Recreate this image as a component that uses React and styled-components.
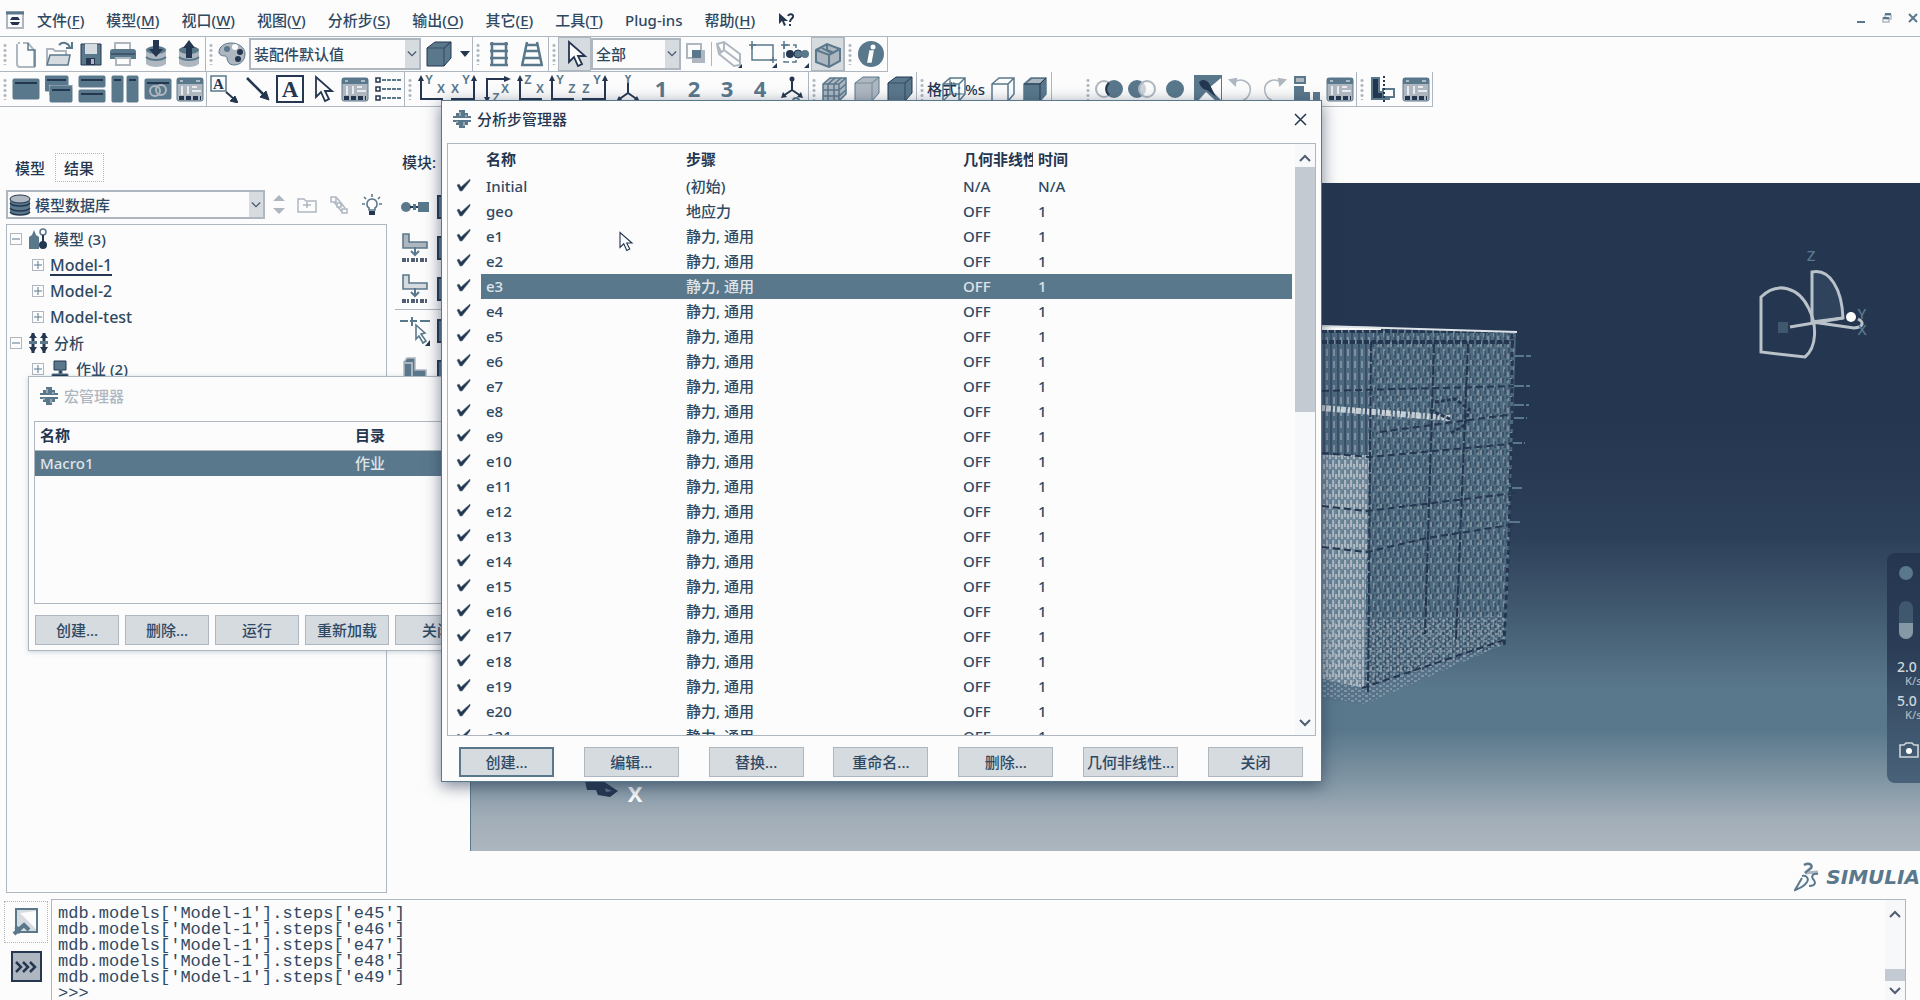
import React from "react";
import styled, { createGlobalStyle, css } from "styled-components";

const D = "#253650";
const M = "#5a788c";
const L = "#aeb7c0";
const W = "#fcfcfc";
const FACE = "#d6dbe0";
const TEXT = "#2f4963";

const Global = createGlobalStyle`
  * { box-sizing: border-box; }
  html, body { margin: 0; background: ${W}; }
  body {
    font-family: "Noto Sans", "Noto Sans CJK SC", sans-serif;
    font-size: 15px;
    font-weight: 500;
    line-height: 20px;
    color: ${TEXT};
    overflow: hidden;
  }
  button, select, input {
    font: inherit;
    color: inherit;
    margin: 0;
    padding: 0;
    border: 0;
    border-radius: 0;
    background: none;
  }
  svg { display: block; flex: none; }
`;

/* ---------- application frame ---------- */

const Desktop = styled.div`
  position: relative;
  display: flex;
  flex-direction: column;
  height: 100vh;
  overflow: hidden;
`;

const MenuBar = styled.header`
  display: flex;
  align-items: center;
  justify-content: space-between;
  height: 37px;
  padding: 4px 2px 0 6px;
  border-bottom: 1px solid ${L};
`;

const MenuItems = styled.nav`
  display: flex;
  align-items: center;
  gap: 22px;
`;

const MenuLogo = styled.span`
  margin-right: -9px;
`;

const MenuItem = styled.button`
  white-space: nowrap;
  u { text-underline-offset: 2px; }
`;

const WindowButtons = styled.div`
  display: flex;
  align-items: center;
  gap: 16px;
  padding-bottom: 4px;
`;

const ToolBar = styled.div`
  display: flex;
`;

const ToolGroup = styled.div`
  display: flex;
  align-items: center;
  height: 35px;
  border-right: 1px solid ${L};
  border-bottom: 1px solid ${L};
`;

const Gap = styled.div`
  width: 31px;
`;

const GripBox = styled.span`
  width: 9px;
  height: 22px;
  background: radial-gradient(circle, ${L} 0 1px, transparent 2px) 0 0 / 10px 5px;
`;

const ToolButton = styled.button`
  display: flex;
  align-items: center;
  justify-content: center;
  width: ${(p) => p.$w || 33}px;
  height: 34px;
  ${(p) => p.$down && css`background: ${FACE}; border: 1px solid ${L};`}
`;

const Divider = styled.span`
  width: 1px;
  height: 24px;
  background: ${L};
`;

const FormatLabel = styled.span`
  position: relative;
  width: 60px;
  padding-left: 1px;
  white-space: nowrap;
  color: ${D};
  svg { position: absolute; left: 14px; top: -4px; }
`;

const SelectBox = styled.span`
  position: relative;
  display: flex;
  width: ${(p) => p.$w}px;
  height: ${(p) => p.$h || 32}px;
  border: 2px solid ${L};
  select {
    appearance: none;
    flex: 1;
    width: 100%;
    padding-left: ${(p) => p.$pad || 3}px;
    color: ${TEXT};
  }
`;

const SelectArrow = styled.span`
  position: absolute;
  right: 0;
  top: 0;
  bottom: 0;
  width: 14px;
  display: flex;
  align-items: center;
  justify-content: center;
  background: ${FACE};
  pointer-events: none;
`;

const SelectIcon = styled.span`
  position: absolute;
  left: 1px;
  top: 2px;
  pointer-events: none;
`;

/* ---------- work area ---------- */

const Work = styled.main`
  flex: 1;
  min-height: 0;
  display: grid;
  grid-template-columns: 387px 83px minmax(0, 1fr);
`;

const SidePanel = styled.section`
  display: flex;
  flex-direction: column;
  min-height: 0;
  padding: 46px 0 6px 6px;
`;

const Tabs = styled.div`
  display: flex;
`;

const Tab = styled.button`
  width: 49px;
  height: 29px;
  padding-right: 1px;
  color: ${D};
  border: 1px ${(p) => (p.$active ? "solid transparent" : `dotted ${L}`)};
`;

const SideTools = styled.div`
  display: flex;
  align-items: center;
  justify-content: space-between;
  padding: 8px 4px 5px 0;
`;

const SideButtons = styled.div`
  display: flex;
  gap: 12px;
`;

const Tree = styled.div`
  flex: 1;
  border: 1px solid ${L};
  padding: 1px 0 0 2px;
`;

const TreeRow = styled.div`
  display: flex;
  align-items: center;
  gap: 6px;
  height: 26px;
  padding-left: ${(p) => (p.$deep ? 23 : 1)}px;
  font-size: ${(p) => (p.$leaf ? 16 : 15)}px;
`;

const TreeName = styled.span`
  line-height: 18px;
  ${(p) => p.$current && css`box-shadow: 0 2px ${D};`}
`;

const Expander = styled.button`
  width: 12px;
  height: 12px;
  border: 1px solid ${L};
  display: flex;
  align-items: center;
  justify-content: center;
`;

const ToolBox = styled.aside`
  padding: 45px 0 0 8px;
`;

const ModuleLabel = styled.div`
  padding: 0 0 14px 7px;
  color: ${D};
`;

const ToolBoxGrid = styled.div`
  display: grid;
  grid-template-columns: 40px 32px;
  grid-auto-rows: 41px;
  align-items: center;
  justify-items: center;
  ${(p) => p.$line && css`border-top: 1px solid ${L};`}
`;

const CanvasColumn = styled.section`
  display: flex;
  flex-direction: column;
  min-height: 0;
  padding-top: 76px;
`;

const Viewport = styled.div`
  position: relative;
  flex: 1;
  overflow: hidden;
  border-left: 1px solid ${M};
  background: linear-gradient(
    ${D} 0%, ${D} 36%, #2d4059 53%, #3d546b 62%, #496479 68%, ${M} 76%,
    ${M} 82%, #8498a6 90%, #a1adb7 95%, #acb6bf 100%
  );
`;

const Placed = styled.div`
  position: absolute;
  left: ${(p) => p.$x}px;
  top: ${(p) => p.$y}px;
`;

const Compass = styled.div`
  position: absolute;
  right: 45px;
  top: 57px;
`;

const Brand = styled.div`
  display: flex;
  align-items: center;
  justify-content: flex-end;
  gap: 5px;
  height: 48px;
  padding-top: 4px;
  font: italic bold 20px "DejaVu Sans", sans-serif;
  color: ${M};
`;

/* ---------- console ---------- */

const Console = styled.footer`
  display: flex;
  height: 101px;
  padding-right: 14px;
`;

const ConsoleTabs = styled.div`
  display: flex;
  flex-direction: column;
  align-items: center;
  gap: 8px;
  width: 51px;
  padding: 2px 0 0 1px;
`;

const ConsoleTab = styled.button`
  display: flex;
  align-items: center;
  justify-content: center;
  width: 44px;
  height: 42px;
  border: 1px dotted ${L};
`;

const PromptTab = styled.button`
  display: flex;
  align-items: center;
  justify-content: center;
  width: 31px;
  height: 31px;
  border: 2px solid ${D};
  background: ${L};
`;

const ConsolePane = styled.div`
  flex: 1;
  display: flex;
  border: 1px solid ${L};
  border-bottom: 0;
`;

const ConsoleText = styled.div`
  flex: 1;
  padding: 6px 0 0 6px;
  font: 17px/16px "Liberation Mono", monospace;
  color: ${TEXT};
  overflow: hidden;
`;

const PromptLine = styled.label`
  display: flex;
  input { flex: 1; height: 16px; outline: 0; }
`;

const ScrollTrack = styled.div`
  display: flex;
  flex-direction: column;
  align-items: center;
  justify-content: space-between;
  width: 20px;
  padding: 10px 0 ${(p) => p.$end || 8}px;
  background: #f7f8f9;
`;

const ScrollThumb = styled.span`
  width: 20px;
  height: ${(p) => p.$h}px;
  margin: ${(p) => p.$m};
  background: #c3cad1;
`;

/* ---------- floating windows ---------- */

const Window = styled.section`
  position: absolute;
  left: ${(p) => p.$x}px;
  top: ${(p) => p.$y}px;
  width: ${(p) => p.$w}px;
  height: ${(p) => p.$h}px;
  display: flex;
  flex-direction: column;
  padding: 0 5px ${(p) => (p.$active ? 4 : 5)}px;
  background: ${W};
  border: 1px solid ${(p) => (p.$active ? M : L)};
  box-shadow: ${(p) => (p.$active ? "0 4px 15px rgba(37, 54, 80, 0.6)" : "0 1px 5px rgba(90, 120, 140, 0.3)")};
`;

const TitleBar = styled.div`
  display: flex;
  align-items: center;
  gap: 6px;
  height: ${(p) => p.$h}px;
  padding: 0 9px 6px 6px;
  color: ${(p) => (p.$active ? D : L)};
  button { margin-left: auto; }
`;

const ListFrame = styled.div`
  flex: 1;
  min-height: 0;
  display: flex;
  overflow: hidden;
  border: 1px solid ${L};
`;

const ListBody = styled.div`
  flex: 1;
  overflow: hidden;
  padding-right: ${(p) => p.$end || 0}px;
`;

const DataTable = styled.table`
  width: 100%;
  table-layout: fixed;
  border-collapse: collapse;
  th, td {
    height: 25px;
    padding: 0 0 0 5px;
    line-height: 25px;
    text-align: left;
    white-space: nowrap;
    overflow: hidden;
  }
  th {
    height: ${(p) => p.$head}px;
    font-weight: 600;
    color: ${D};
    ${(p) => p.$rule && css`border-bottom: 1px solid ${L};`}
  }
`;

const Cell = styled.td`
  ${(p) => p.$on && css`background: ${M}; color: #dfe4e8;`}
`;

const Column = styled.col`
  width: ${(p) => p.$w}px;
`;

const CheckPad = styled.span`
  display: block;
  padding-left: 3px;
`;

const ButtonRow = styled.div`
  display: flex;
  justify-content: ${(p) => (p.$spread ? "space-between" : "flex-start")};
  gap: 6px;
  padding: ${(p) => (p.$spread ? "11px 13px 0 12px" : "11px 1px 0")};
`;

const PushButton = styled.button`
  flex: none;
  width: ${(p) => p.$w}px;
  height: 30px;
  white-space: nowrap;
  color: ${TEXT};
  background: ${FACE};
  border: ${(p) => (p.$main ? `2px solid ${M}` : `1px solid ${L}`)};
`;

/* ---------- screen recorder ---------- */

const Recorder = styled.aside`
  position: absolute;
  right: 0;
  top: 553px;
  width: 33px;
  height: 230px;
  padding: 13px 0 0 12px;
  border-radius: 8px 0 0 8px;
  background: linear-gradient(${D} 0%, #2a3c56 40%, #3b526a 70%, #48627a 100%);
  color: #cfd5da;
  overflow: hidden;
`;

const Rate = styled.div`
  height: 34px;
  margin-left: -2px;
  font-size: 14px;
  line-height: 16px;
  white-space: nowrap;
  small { display: block; padding-left: 8px; font-size: 11px; line-height: 12px; color: ${L}; }
`;

const RecorderGap = styled.div`
  height: ${(p) => p.$h}px;
`;

/* ---------- drawings ---------- */

const Ic = ({ w = 28, h = 28, vw, vh, children }) => (
  <svg width={w} height={h} viewBox={`0 0 ${vw || w} ${vh || h}`} fill="none" stroke={M} strokeWidth="2" aria-hidden="true">
    {children}
  </svg>
);

const Chevron = ({ up, size = 12, width = 2 }) => (
  <Ic w={size} h={8} vw={12} vh={8}>
    <path d={up ? "M1 7 6 2l5 5" : "M1 1l5 5 5-5"} strokeWidth={width} stroke={D} strokeOpacity=".8" />
  </Ic>
);

const Mark = () => (
  <Ic w={18} h={18}>
    <path d="M6 0h6v3h3v3h3v2H0V6h3V3h3zM0 10h18v2h-3v3h-3v3H6v-3H3v-3H0z" fill={M} stroke="none" />
    <path d="M7 2v4M11 12v4M13 5v2M4 11v2" stroke={L} strokeWidth="1.5" />
  </Ic>
);

const PageIcon = () => (
  <Ic><path d="M6 3h2M5 4v20c0 2 1 3 3 3h14V10l-6-7h-5" stroke={L} /><path d="M16 3v7h7v17" stroke={M} strokeWidth="1.5" /></Ic>
);
const OpenIcon = () => (
  <Ic><path d="M2 24V9h6l2 2h11v4" stroke={L} /><path d="M2 25l3-10h20l-2 10z" fill={FACE} stroke={M} strokeWidth="1.5" /><path d="M14 5c4-4 9-2 11 2m2-5v6h-6" strokeWidth="2" /></Ic>
);
const SaveIcon = () => (
  <Ic><path d="M4 4h20v21H4z" fill={M} stroke={D} strokeWidth="1" /><path d="M8 4h12v10H8z" fill={FACE} stroke="none" /><path d="M9 18h9v7H9z" fill={D} stroke="none" /><path d="M14 19h3v5h-3z" fill={L} stroke="none" /></Ic>
);
const PrintIcon = () => (
  <Ic><path d="M6 10V3h15v7" fill={W} stroke={L} /><path d="M1 12c0-2 1-3 3-3h20c2 0 3 1 3 3v7H1z" fill={M} stroke="none" /><path d="M2 14h24" stroke={D} strokeWidth="1" /><path d="M7 18h14v7H7z" fill={W} stroke={L} /></Ic>
);
const DbIcon = ({ up }) => (
  <Ic>
    <path d="M4 9v15c5 4 15 4 20 0V9z" fill={L} stroke="none" />
    <ellipse cx="14" cy="10" rx="10" ry="4" fill={M} stroke="none" />
    <path d="M4 17c5 4 15 4 20 0" stroke={M} />
    <path d={up ? "M14 0l6 8h-3v10h-6V8H8z" : "M11 0h6v9h4l-7 8-7-8h4z"} fill={D} stroke="none" />
  </Ic>
);
const PaletteIcon = () => (
  <Ic>
    <path d="M13 3C6 3 1 7 1 12c0 3 3 4 6 4 3 0 1 5 5 8 6 3 15-1 15-10C27 7 20 3 13 3z" fill={L} stroke={M} strokeWidth="1" />
    <circle cx="9" cy="9" r="3" fill={M} stroke="none" /><circle cx="17" cy="7" r="3" fill={W} stroke="none" /><circle cx="22" cy="12" r="3" fill={D} stroke="none" /><circle cx="20" cy="19" r="3" fill={D} stroke="none" />
  </Ic>
);
const CubeSolid = ({ fill = M, line = D }) => (
  <Ic><path d="M2 8l8-6h16v16l-7 8H2z" fill={fill} stroke={line} strokeWidth="1" /><path d="M2 8h17v18M19 8l7-6" stroke={line} strokeWidth="1.2" strokeOpacity=".6" /></Ic>
);
const CubeGrid = () => (
  <Ic><path d="M3 9l7-6h16v16l-7 7H3z" fill={L} strokeWidth="1.5" /><path d="M3 9h16v17M19 9l7-6M8 9v17M14 9v17M3 15h16l7-6M3 21h16l7-6M8 9l7-6M14 9l7-6" strokeWidth="1.5" /></Ic>
);
const CubeLine = ({ all }) => (
  <Ic><path d="M3 9l7-6h15v16l-6 7H3zM3 9h16v17M19 9l6-6" strokeWidth="1.5" />{all && <path d="M10 3v16h15M10 19l-7 7" strokeWidth="1.2" />}</Ic>
);
const CubeShade = () => (
  <Ic><path d="M3 9l7-6h15v16l-6 7H3z" fill={M} strokeWidth="1.5" /><path d="M6 8l5-4h12l-4 4z" fill={L} stroke="none" /><path d="M3 9h16v17M19 9l6-6" stroke={D} strokeWidth="1" /></Ic>
);
const Ladder = ({ tilt }) => (
  <Ic>
    {tilt ? (
      <path d="M9 2 4 26M19 2l5 24M8 5h12M7 11h14M6 18h16M3 25h22" strokeWidth="2.5" />
    ) : (
      <path d="M7 2v24M21 2v24M5 4h18M5 11h18M5 18h18M5 25h18" strokeWidth="2.5" />
    )}
  </Ic>
);
const CursorIcon = ({ w = 28, h = 28, line = 1.8 }) => (
  <Ic w={w} h={h} vw={28} vh={28}><path d="M8 2v20l5-5 4 9 4-2-4-8h7z" fill={W} stroke={D} strokeWidth={line} /></Ic>
);
const Overlap = () => (
  <Ic w={24} h={26}><path d="M3 3h14v14H3z" fill={W} stroke={L} /><path d="M8 9h13v13H8z" fill={L} stroke="none" /><path d="M8 17V9h9v8z" fill={M} stroke="none" /></Ic>
);
const HexBox = () => (
  <Ic><path d="M2 4l7-2 16 12v11l-6 1L4 14zM2 4l4 8M9 2v8l16 12M4 14l5-4" stroke={L} /><path d="M27 28v-4l-4 4z" fill={D} stroke="none" /></Ic>
);
const RectIcon = () => (
  <Ic><path d="M3 5h21v15H3z" strokeWidth="1.5" /><path d="M3 1v8M0 5h7M24 17v6M21 20h7" strokeWidth="1.5" /><path d="M28 28v-5l-5 5z" fill={D} stroke="none" /></Ic>
);
const GroupIcon = () => (
  <Ic><path d="M3 5h12v17H3z" strokeWidth="1.5" strokeDasharray="6 3" /><path d="M3 1v8M0 5h7" strokeWidth="1.5" /><circle cx="9" cy="14" r="4" fill={D} stroke="none" /><circle cx="17" cy="14" r="4" fill={M} stroke={D} strokeWidth="1" /><circle cx="24" cy="14" r="4" fill={M} stroke="none" /><path d="M28 28v-5l-5 5z" fill={D} stroke="none" /></Ic>
);
const DrumIcon = () => (
  <Ic><path d="M2 10l11-6 13 5v12l-11 6-13-5z" fill={L} strokeWidth="2" /><path d="M2 10l13 5 11-6M15 15v12M8 8l9 5M13 4v6l7 3" strokeWidth="2" /></Ic>
);
const InfoIcon = () => (
  <Ic><circle cx="14" cy="14" r="13" fill={M} stroke="none" /><circle cx="16" cy="7" r="2.5" fill={W} stroke="none" /><path d="M16 11h-3l-2 11h3z" fill={W} stroke={W} strokeWidth="1.5" /></Ic>
);

const Pane = ({ x, y, w, h }) => (
  <g><rect x={x} y={y} width={w} height={h} fill={M} stroke={M} strokeWidth="1" rx="1" /><path d={`M${x + 2} ${y + 4}h${w - 4}`} stroke={D} strokeWidth="2" /></g>
);
const PanesIcon = ({ kind }) => (
  <Ic>
    {kind === 1 && <Pane x={1} y={4} w={26} h={20} />}
    {kind === 2 && <g><Pane x={0} y={1} w={23} h={15} /><path d="M4 10h24v1H5v9H4z" fill={L} stroke="none" /><Pane x={5} y={11} w={22} h={16} /></g>}
    {kind === 3 && <g><Pane x={1} y={1} w={26} h={11} /><Pane x={1} y={15} w={26} h={12} /></g>}
    {kind === 4 && <g><Pane x={1} y={1} w={11} h={26} /><Pane x={16} y={1} w={11} h={26} /></g>}
    {kind === 5 && <g><Pane x={1} y={4} w={26} h={20} /><circle cx="11" cy="16" r="5" stroke={L} /><circle cx="17" cy="15" r="5" stroke={L} /></g>}
  </Ic>
);
const FormIcon = () => (
  <Ic>
    <rect x="1" y="3" width="26" height="23" rx="2" fill={L} stroke={M} strokeWidth="1" />
    <path d="M1 3h26v6H1z" fill={M} stroke="none" />
    <path d="M4 6h3M20 6h4" stroke={W} strokeWidth="1" />
    <path d="M6 11v9M12 11v8M16 16h9M16 12h5" stroke={W} strokeWidth="1.5" />
    <path d="M3 23h22" stroke={D} strokeWidth="4" strokeDasharray="5 2" />
  </Ic>
);
const Letter = ({ x, y, size, children }) => (
  <text x={x} y={y} fontSize={size} fontWeight="700" fontFamily="Liberation Serif, serif" fill={D} stroke="none" textAnchor="middle">{children}</text>
);
const NoteArrow = () => (
  <Ic><path d="M1 1h15v15H1z" strokeWidth="1.5" /><Letter x={8.5} y={14} size={15}>A</Letter><path d="M16 17l8 7" stroke={D} /><path d="M28 28l-8-2 5-5z" fill={D} stroke={D} strokeWidth="1" /></Ic>
);
const ArrowIcon = () => (
  <Ic><path d="M4 3l17 17" stroke={D} strokeWidth="2.5" /><path d="M26 25l-9-3 6-6z" fill={D} stroke={D} strokeWidth="1" /></Ic>
);
const TextBoxIcon = () => (
  <Ic><path d="M1 1h26v26H1z" stroke={D} /><Letter x={14} y={22} size={23}>A</Letter></Ic>
);
const ListIcon = () => (
  <Ic><path d="M8 5h19M8 14h19M8 23h19" strokeWidth="2" strokeDasharray="4 1" /><path d="M2 3h4v4H2zM2 12h4v4H2zM2 21h4v4H2z" stroke={D} strokeWidth="1.5" /></Ic>
);

const AxisText = ({ x, y, children }) => (
  <text x={x} y={y} fontSize="12" fontWeight="700" fontFamily="Liberation Sans, sans-serif" fill={M} stroke="none" textAnchor="middle">{children}</text>
);
const Axes = ({ v, h, flip }) => (
  <Ic>
    <path d={flip ? "M24 3v21H1" : "M4 3v21h22"} stroke={D} />
    <path d={flip ? "M24 0l3 6h-6z" : "M4 0l3 6H1z"} fill={D} stroke="none" />
    <AxisText x={flip ? 16 : 12} y={9}>{v}</AxisText>
    <AxisText x={flip ? 5 : 24} y={18}>{h}</AxisText>
  </Ic>
);
const AxesTop = () => (
  <Ic><path d="M4 24V4h19" stroke={D} /><path d="M28 4l-7-3v6zM4 28l-3-6h6z" fill={D} stroke="none" /><AxisText x={22} y={18}>X</AxisText><AxisText x={13} y={27}>Z</AxisText></Ic>
);
const AxesIso = () => (
  <Ic><path d="M14 8v10L4 25M14 18l10 7" stroke={D} /><path d="M2 27l3-6 3 4zM26 27l-3-6-3 4z" fill={D} stroke="none" /><AxisText x={14} y={8}>Y</AxisText></Ic>
);
const Tripod = () => (
  <Ic><path d="M14 3v12l-9 6M14 15l9 6" stroke={D} /><circle cx="14" cy="4" r="2.5" fill={D} stroke="none" /><path d="M3 23l2-6 4 5zM25 23l-2-6-4 5z" fill={D} stroke="none" /><circle cx="18" cy="26" r="3" /></Ic>
);
const Digit = ({ n }) => (
  <Ic><text x="14" y="22" fontSize="22" fontWeight="700" fontFamily="Noto Sans, sans-serif" fill={M} stroke="none" textAnchor="middle">{n}</text></Ic>
);
const Discs = ({ kind }) => (
  <Ic>
    {kind === 1 && <g><circle cx="9" cy="14" r="8" stroke={L} /><circle cx="19" cy="14" r="8" fill={M} /><path d="M14 8a8 8 0 0 0 0 12" stroke={D} /></g>}
    {kind === 2 && <g><circle cx="9" cy="14" r="8" fill={M} /><circle cx="19" cy="14" r="8" fill={W} fillOpacity=".7" stroke={L} /></g>}
    {kind === 3 && <circle cx="14" cy="14" r="8" fill={M} />}
  </Ic>
);
const PaintIcon = () => (
  <Ic><path d="M0 0h28v28H0z" fill={M} stroke="none" /><path d="M27 3v22L15 13zM3 27h20L12 17z" fill={W} stroke="none" /><path d="M5 7c5-4 9-1 11 3l6 12-9-7c-4 0-7-4-8-8z" fill={D} stroke="none" /></Ic>
);
const TurnIcon = ({ flip }) => (
  <Ic><g transform={flip ? "translate(28 0) scale(-1 1)" : undefined}><path d="M7 7c9-5 18 1 16 10-1 4-3 7-7 8" stroke={L} strokeWidth="1.5" /><path d="M3 5l6-1-1 6z" fill={L} stroke={L} /></g></Ic>
);
const PartIcon = () => (
  <Ic><path d="M2 2h10v6H2z" fill={L} /><path d="M1 11h10v6h6v10H1z" fill={M} stroke="none" /><path d="M20 17h7v10h-7z" fill={M} stroke="none" /></Ic>
);
const CutIcon = () => (
  <Ic><path d="M3 3h7v14h10v7H3z" fill={D} stroke={M} /><path d="M14 14h11v8H14z" fill={W} /><path d="M15 1v28" stroke={D} strokeDasharray="2 2" /></Ic>
);
const BulbIcon = () => (
  <Ic w={22} h={22}><path d="M11 5a5 5 0 0 0-3 9v2h6v-2a5 5 0 0 0-3-9z" fill={W} strokeWidth="1.6" /><path d="M8 17h6v4H8z" fill={D} stroke="none" /><path d="M11 0v3M3 3l2 2M19 3l-2 2M1 10h3M18 10h3" strokeWidth="1.6" /></Ic>
);
const StackIcon = () => (
  <Ic w={22} h={22}>
    <path d="M1 4v14c3 4 17 4 20 0V4z" fill={M} stroke="none" /><ellipse cx="11" cy="5" rx="10" ry="4" fill={L} stroke={D} strokeWidth="1" />
    <path d="M1 9c3 4 17 4 20 0M1 14c3 4 17 4 20 0M1 18c3 4 17 4 20 0" stroke={D} strokeWidth="1.3" />
  </Ic>
);
const ModelIcon = () => (
  <Ic w={20} h={22}><path d="M1 21V9l3-2 2-5 2 5 3 2v12z" fill={M} stroke="none" /><circle cx="15" cy="4" r="3" strokeWidth="1.5" /><path d="M15 7v9" stroke={D} /><circle cx="15" cy="17" r="4" fill={D} stroke="none" /></Ic>
);
const AnalysisIcon = () => (
  <Ic w={20} h={22}><path d="M5 1v20M16 1v20" stroke={D} strokeWidth="3" /><path d="M5 1l4 5H1zM5 21l4-6H1zM16 1l4 5h-8zM16 21l4-6h-8z" fill={D} stroke="none" /><path d="M1 9h8v3H1zM12 9h8v3h-8z" fill={M} stroke="none" /></Ic>
);
const JobIcon = () => (
  <Ic w={20} h={20}><path d="M4 2h12v9H4z" fill={M} stroke={D} strokeWidth="1" /><path d="M9 11h3v4H9zM2 15h16v4H2z" fill={D} stroke={M} strokeWidth="1" /></Ic>
);
const LinkIcon = () => (
  <Ic w={30} h={14}><circle cx="6" cy="7" r="5" fill={M} stroke="none" /><path d="M10 7h9" stroke={D} /><path d="M18 2h11v10H18zM13 4h3v6h-3z" fill={M} stroke="none" /></Ic>
);
const StepToolIcon = ({ light }) => (
  <Ic w={28} h={30}><path d="M2 1h6v8h18v6H2z" fill={light ? FACE : L} strokeWidth="1.6" /><path d="M14 14v8M10 18l4 4 4-4" strokeWidth="2" /><path d="M1 27h26" stroke={D} strokeWidth="4" strokeDasharray="4 1 2 2" strokeOpacity=".8" /></Ic>
);
const PickIcon = () => (
  <Ic w={30} h={32}><path d="M0 6h8M10 6h7M20 6h10M12 2v9" stroke={M} /><path d="M16 10l9 8-4 1 5 7-3 2-4-7-3 3z" fill={W} strokeWidth="1.6" /><path d="M30 31v-6l-5 6z" fill={D} stroke="none" /></Ic>
);
const LToolIcon = () => (
  <Ic w={28} h={32}><path d="M3 6l3-4h8v12h11v17H3z" fill={M} stroke={L} strokeWidth="1.5" /><path d="M4 7h7v23" stroke={L} /></Ic>
);
const DarkTool = () => (
  <Ic w={28} h={24}><path d="M1 1h26v22H1z" fill={M} stroke={D} /></Ic>
);
const CheckMark = () => (
  <Ic w={15} h={15}><path d="M1 6l2-1 2 3L14 0v2L6 12H4z" fill={D} stroke={M} strokeWidth=".6" /></Ic>
);

const MeshModel = () => (
  <svg width="270" height="440" viewBox="1300 310 270 440" fill="none" aria-hidden="true">
    <defs>
      <pattern id="side" width="10" height="18" patternUnits="userSpaceOnUse">
        <rect width="10" height="18" fill="#4f6b80" />
        <path d="M1 0v5M4 7v6M8 12v5M8 2v3" stroke="#a3b0bb" strokeWidth="1" />
        <path d="M3 0v5M5 9v7M9 6v5M0 12v6M7 0v3" stroke={D} strokeWidth="1" />
      </pattern>
      <pattern id="front" width="6" height="10" patternUnits="userSpaceOnUse">
        <rect width="6" height="10" fill="#6f899b" />
        <path d="M1 0v7M4 4v5" stroke={L} strokeWidth="2" />
        <path d="M5 0v4" stroke={M} />
      </pattern>
      <pattern id="upper" width="7" height="12" patternUnits="userSpaceOnUse">
        <rect width="7" height="12" fill="#4e6a7f" />
        <path d="M1 0v12" stroke={D} /><path d="M4 1v7" stroke={L} />
      </pattern>
      <pattern id="floor" width="7" height="5" patternUnits="userSpaceOnUse">
        <path d="M0 1h3M4 4h2" stroke={L} strokeWidth="1" />
      </pattern>
    </defs>
    <path d="M1300 326l216 6-10 312-146 60-60-8z" fill="#55728a" fillOpacity=".8" />
    <path d="M1370 330l145 3-9 311-141 44z" fill="url(#side)" />
    <path d="M1300 330h71l-2 125h-69z" fill="url(#upper)" />
    <path d="M1300 455h69l-5 233-64-14z" fill="url(#front)" />
    <path d="M1365 620l140-4v28l-140 60-60-10v-74z" fill="url(#floor)" />
    <path d="M1322 331h192M1322 342h192" stroke={D} strokeWidth="4" strokeDasharray="5 2" />
    <path d="M1321 326l60 1v3h-60z" fill={W} />
    <path d="M1321 326l196 6" stroke="#dfe4e8" strokeWidth="2" />
    <path d="M1322 408l128 10" stroke={W} strokeWidth="6" strokeDasharray="3 1 5 2 2 2" strokeOpacity=".7" />
    <path d="M1434 344l-9 290M1468 344l-12 296M1371 342l-3 350" stroke={D} strokeWidth="2" strokeDasharray="9 2" />
    <path d="M1435 402l20-3 14 10-4 16-14 8M1430 410l22 10" stroke={D} strokeWidth="3" strokeDasharray="4 2" />
    <path d="M1322 391l194-5M1322 453l48 4 150-14M1322 506l45 5 148-18M1322 547l45 5 60-14 90-14M1362 688l142-48M1380 432l134-18" stroke={D} strokeWidth="2" strokeDasharray="7 4" />
    <path d="M1514 356h17M1514 386h16M1514 405h15M1514 418h13M1512 443h13M1512 488h11M1510 522h11" stroke={M} strokeWidth="2" strokeDasharray="10 2" />
    <path d="M1512 334v82l-3 120-5 110" stroke={D} strokeWidth="3" strokeDasharray="5 4" />
  </svg>
);

const CompassDrawing = () => (
  <svg width="120" height="120" viewBox="1755 240 120 120" fill="none" stroke="#b9c1c9" strokeWidth="3" aria-hidden="true">
    <path d="M1812 322v-50c18-4 30 18 31 46z" fill="#30435c" />
    <path d="M1761 352v-55c16-16 38-10 48 12 8 16 8 38-4 48z" />
    <path d="M1790 327l53-9M1812 322l42 6c10-1 10-6 4-9" />
    <path d="M1778 322h10v11h-10z" fill="#40586e" stroke="none" />
    <circle cx="1851" cy="317" r="5" fill={W} stroke="none" />
    <g fill={M} stroke="none" fontSize="15" fontFamily="Noto Sans, sans-serif" textAnchor="middle">
      <text x="1811" y="261">Z</text>
      <text x="1862" y="319">Y</text>
      <text x="1862" y="335">X</text>
    </g>
  </svg>
);

const DsLogo = () => (
  <svg width="27" height="30" viewBox="0 0 27 30" fill="none" stroke={M} strokeWidth="2" aria-hidden="true">
    <path d="M10 3c5-3 9 0 7 3l-6 5M11 11l13-1" stroke={L} strokeWidth="3" />
    <path d="M10 3c5-3 9 0 7 3l-6 5M8 14c5-1 7 3 5 6-3 5-7 6-12 8l7-12M24 12c-5-1-7 2-5 5 3 3 3 7-4 7" />
  </svg>
);

/* ---------- pieces ---------- */

const Grip = () => <GripBox aria-hidden="true" />;

const Tool = ({ name, w, down, children }) => (
  <ToolButton type="button" aria-label={name} $w={w} $down={down}>{children}</ToolButton>
);

const Select = ({ label, value, w, h, icon, pad }) => (
  <SelectBox $w={w} $h={h} $pad={pad}>
    {icon && <SelectIcon>{icon}</SelectIcon>}
    <select aria-label={label} defaultValue={value}><option>{value}</option></select>
    <SelectArrow><Chevron size={10} width={1.5} /></SelectArrow>
  </SelectBox>
);

const MENUS = [
  ["文件", "F"], ["模型", "M"], ["视口", "W"], ["视图", "V"], ["分析步", "S"],
  ["输出", "O"], ["其它", "E"], ["工具", "T"], ["Plug-ins"], ["帮助", "H"],
];

const STEPS = [
  ["Initial", "(初始)", "N/A", "N/A"],
  ["geo", "地应力", "OFF", "1"],
  ...Array.from({ length: 21 }, (_, i) => [`e${i + 1}`, "静力, 通用", "OFF", "1"]),
];

const TreeNode = ({ open, icon, deep, leaf, current, children }) => (
  <TreeRow $deep={deep} $leaf={leaf}>
    <Expander type="button" aria-label={open ? "折叠" : "展开"}>
      <Ic w={8} h={8}><path d={open ? "M0 4h8" : "M0 4h8M4 0v8"} strokeWidth="1" /></Ic>
    </Expander>
    {icon}
    <TreeName $current={current}>{children}</TreeName>
  </TreeRow>
);

const MacroManager = () => (
  <Window $x={28} $y={376} $w={460} $h={275} aria-label="宏管理器">
    <TitleBar $h={44}><Mark />宏管理器</TitleBar>
    <ListFrame>
      <ListBody>
        <DataTable $head={28} $rule>
          <colgroup><Column $w={315} /><col /></colgroup>
          <thead><tr><th>名称</th><th>目录</th></tr></thead>
          <tbody><tr><Cell $on>Macro1</Cell><Cell $on>作业</Cell></tr></tbody>
        </DataTable>
      </ListBody>
    </ListFrame>
    <ButtonRow>
      {["创建...", "删除...", "运行", "重新加载", "关闭"].map((t) => (
        <PushButton type="button" $w={84} key={t}>{t}</PushButton>
      ))}
    </ButtonRow>
  </Window>
);

const StepManager = () => (
  <Window $x={441} $y={100} $w={881} $h={682} $active aria-label="分析步管理器">
    <TitleBar $h={42} $active>
      <Mark />分析步管理器
      <button type="button" aria-label="关闭窗口">
        <Ic w={13} h={13}><path d="M1 1l11 11M12 1L1 12" stroke={D} strokeWidth="1.5" /></Ic>
      </button>
    </TitleBar>
    <ListFrame>
      <ListBody $end={3}>
        <DataTable $head={30}>
          <colgroup>
            <Column $w={33} /><Column $w={200} /><Column $w={277} /><Column $w={75} /><col />
          </colgroup>
          <thead><tr><th aria-label="状态" /><th>名称</th><th>步骤</th><th>几何非线性</th><th>时间</th></tr></thead>
          <tbody>
            {STEPS.map((row) => (
              <tr key={row[0]}>
                <Cell><CheckPad><CheckMark /></CheckPad></Cell>
                {row.map((v, i) => <Cell key={i} $on={row[0] === "e3"}>{v}</Cell>)}
              </tr>
            ))}
          </tbody>
        </DataTable>
      </ListBody>
      <ScrollTrack aria-hidden="true">
        <Chevron up />
        <ScrollThumb $h={245} $m="5px 0 auto" />
        <Chevron />
      </ScrollTrack>
    </ListFrame>
    <ButtonRow $spread>
      {["创建...", "编辑...", "替换...", "重命名...", "删除...", "几何非线性...", "关闭"].map((t, i) => (
        <PushButton type="button" $w={95} $main={i === 0} key={t}>{t}</PushButton>
      ))}
    </ButtonRow>
    <Placed $x={172} $y={130}><CursorIcon w={21} h={21} line={1.5} /></Placed>
  </Window>
);

export default function App() {
  return (
    <Desktop>
      <Global />
      <MenuBar>
        <MenuItems>
          <MenuLogo>
            <Ic w={18} h={18}><path d="M1 1h16v16H1z" stroke={L} /><path d="M0 2h18" stroke={M} strokeWidth="3" /><path d="M6 6h6l2 3H4zM4 11h10l-2 3H6z" fill={D} stroke="none" /></Ic>
          </MenuLogo>
          {MENUS.map(([name, key]) => (
            <MenuItem type="button" key={name}>{name}{key && <>(<u>{key}</u>)</>}</MenuItem>
          ))}
          <MenuItem type="button" aria-label="这是什么">
            <Ic w={18} h={18}><path d="M2 2v11l3-3 2 5 2-1-2-4h4z" fill={D} stroke="none" /><path d="M11 5c1-3 6-2 5 1-1 2-3 2-3 5M13 13v2" stroke={D} strokeWidth="2" /></Ic>
          </MenuItem>
        </MenuItems>
        <WindowButtons>
          <button type="button" aria-label="最小化"><Ic w={10} h={12}><path d="M1 10h8" /></Ic></button>
          <button type="button" aria-label="还原"><Ic w={10} h={12}><path d="M3 3h6v4H3zM1 6h6v4H1z" fill={W} stroke={L} strokeWidth="1.5" /><path d="M3 2h6M1 6h6" /></Ic></button>
          <button type="button" aria-label="关闭"><Ic w={10} h={12}><path d="M1 2l8 8M9 2l-8 8" /></Ic></button>
        </WindowButtons>
      </MenuBar>

      <ToolBar>
        <ToolGroup>
          <Grip />
          <Tool name="新建"><PageIcon /></Tool>
          <Tool name="打开"><OpenIcon /></Tool>
          <Tool name="保存" w={32}><SaveIcon /></Tool>
          <Tool name="打印" w={32}><PrintIcon /></Tool>
          <Tool name="导入"><DbIcon /></Tool>
          <Tool name="导出"><DbIcon up /></Tool>
        </ToolGroup>
        <ToolGroup>
          <Grip />
          <Tool name="颜色" w={34}><PaletteIcon /></Tool>
          <Select label="颜色代码" value="装配件默认值" w={172} />
          <Tool name="着色" w={36}><CubeSolid /></Tool>
          <Tool name="更多" w={15}><Ic w={10} h={6}><path d="M0 0h10L5 6z" fill={D} stroke="none" /></Ic></Tool>
        </ToolGroup>
        <ToolGroup>
          <Grip />
          <Tool name="平行"><Ladder /></Tool>
          <Tool name="透视"><Ladder tilt /></Tool>
        </ToolGroup>
        <ToolGroup>
          <Grip />
          <Tool name="选择" down><CursorIcon /></Tool>
          <Select label="选择过滤" value="全部" w={90} />
          <Tool name="重叠" w={30}><Overlap /></Tool>
          <Divider />
          <Tool name="实体" w={34}><HexBox /></Tool>
          <Tool name="矩形"><RectIcon /></Tool>
          <Tool name="组" w={32}><GroupIcon /></Tool>
          <Tool name="内部" down><DrumIcon /></Tool>
        </ToolGroup>
        <ToolGroup>
          <Grip />
          <Tool name="信息"><InfoIcon /></Tool>
        </ToolGroup>
      </ToolBar>

      <ToolBar>
        <ToolGroup>
          <Grip />
          {[1, 2, 3, 4, 5].map((k) => <Tool name={`视口 ${k}`} key={k}><PanesIcon kind={k} /></Tool>)}
          <Tool name="视口管理" w={32}><FormIcon /></Tool>
        </ToolGroup>
        <ToolGroup>
          <Tool name="注释"><NoteArrow /></Tool>
          <Tool name="箭头"><ArrowIcon /></Tool>
          <Tool name="文本"><TextBoxIcon /></Tool>
          <Tool name="编辑注释" w={32}><CursorIcon /></Tool>
          <Tool name="注释管理"><FormIcon /></Tool>
          <Tool name="选项"><ListIcon /></Tool>
        </ToolGroup>
        <ToolGroup>
          <Grip />
          <Tool name="前视"><Axes v="Y" h="X" /></Tool>
          <Tool name="后视"><Axes v="Y" h="X" flip /></Tool>
          <Tool name="俯视"><AxesTop /></Tool>
          <Tool name="仰视"><Axes v="Z" h="X" /></Tool>
          <Tool name="左视" w={32}><Axes v="Y" h="Z" /></Tool>
          <Tool name="右视"><Axes v="Y" h="Z" flip /></Tool>
          <Tool name="等轴"><AxesIso /></Tool>
          {[1, 2, 3, 4].map((n) => <Tool name={`自定义 ${n}`} w={33} key={n}><Digit n={n} /></Tool>)}
          <Tool name="指定" w={32}><Tripod /></Tool>
        </ToolGroup>
        <ToolGroup>
          <Grip />
          <Tool name="网格" w={32}><CubeGrid /></Tool>
          <Tool name="种子"><CubeSolid fill={L} line={M} /></Tool>
          <Tool name="实体着色"><CubeSolid /></Tool>
        </ToolGroup>
        <ToolGroup>
          <Grip />
          <FormatLabel>格式: %s<CubeLine all /></FormatLabel>
          <Tool name="消隐"><CubeLine /></Tool>
          <Tool name="阴影" w={32}><CubeShade /></Tool>
        </ToolGroup>
        <Gap />
        <ToolGroup>
          <Grip />
          <Tool name="替换显示"><Discs kind={1} /></Tool>
          <Tool name="移除显示"><Discs kind={2} /></Tool>
          <Tool name="全部显示"><Discs kind={3} /></Tool>
          <Tool name="涂色"><PaintIcon /></Tool>
          <Tool name="撤销"><TurnIcon /></Tool>
          <Tool name="重做"><TurnIcon flip /></Tool>
          <Tool name="部件"><PartIcon /></Tool>
          <Tool name="显示组管理"><FormIcon /></Tool>
        </ToolGroup>
        <ToolGroup>
          <Grip />
          <Tool name="切面"><CutIcon /></Tool>
          <Tool name="切面管理"><FormIcon /></Tool>
        </ToolGroup>
      </ToolBar>

      <Work>
        <SidePanel>
          <Tabs>
            <Tab type="button" $active>模型</Tab>
            <Tab type="button">结果</Tab>
          </Tabs>
          <SideTools>
            <Select label="数据库" value="模型数据库" w={259} h={29} pad={27} icon={<StackIcon />} />
            <SideButtons>
              <button type="button" aria-label="上下"><Ic w={12} h={22}><path d="M0 7h12L6 1zM0 14h12l-6 6z" fill={L} stroke="none" /></Ic></button>
              <button type="button" aria-label="上级"><Ic w={20} h={22}><path d="M1 18V5h6l2 2h10v11zM6 11h8M10 8v6" stroke={L} strokeWidth="1.5" /></Ic></button>
              <button type="button" aria-label="过滤"><Ic w={20} h={22}><path d="M2 3h5v5H2zM8 9h4v4H8zM13 15h5v4h-5zM5 8l8 10M8 4l8 10" stroke={L} strokeWidth="1.5" /></Ic></button>
              <button type="button" aria-label="提示"><BulbIcon /></button>
            </SideButtons>
          </SideTools>
          <Tree>
            <TreeNode open icon={<ModelIcon />}>模型 (3)</TreeNode>
            <TreeNode deep leaf current>Model-1</TreeNode>
            <TreeNode deep leaf>Model-2</TreeNode>
            <TreeNode deep leaf>Model-test</TreeNode>
            <TreeNode open icon={<AnalysisIcon />}>分析</TreeNode>
            <TreeNode deep icon={<JobIcon />}>作业 (2)</TreeNode>
          </Tree>
        </SidePanel>

        <ToolBox>
          <ModuleLabel>模块:</ModuleLabel>
          <ToolBoxGrid>
            <LinkIcon /><DarkTool />
            <StepToolIcon /><DarkTool />
            <StepToolIcon light /><DarkTool />
          </ToolBoxGrid>
          <ToolBoxGrid $line>
            <PickIcon /><DarkTool />
            <LToolIcon /><DarkTool />
          </ToolBoxGrid>
        </ToolBox>

        <CanvasColumn>
          <Viewport>
            <Placed $x={829} $y={127}><MeshModel /></Placed>
            <Placed $x={112} $y={592}>
              <svg width="64" height="32" viewBox="0 0 64 32" aria-hidden="true">
                <path d="M2 6h18l15 10-8 6-12-2-2-5H4z" fill={D} />
                <path d="M22 13l7 3-6 1z" fill={M} />
                <text x="52" y="27" fontSize="22" fontWeight="700" fontFamily="Noto Sans, sans-serif" fill={W} textAnchor="middle">X</text>
              </svg>
            </Placed>
            <Compass><CompassDrawing /></Compass>
          </Viewport>
          <Brand><DsLogo />SIMULIA</Brand>
        </CanvasColumn>
      </Work>

      <Console>
        <ConsoleTabs>
          <ConsoleTab type="button" aria-label="消息">
            <Ic w={28} h={30}><path d="M4 2h21v23H4z" fill={FACE} /><path d="M24 4v18L8 6z" fill={W} stroke="none" /><path d="M2 27l10-9 5 5M4 20l4 6" stroke={M} strokeWidth="4" /></Ic>
          </ConsoleTab>
          <PromptTab type="button" aria-label="命令行">
            <Ic w={24} h={14}><path d="M2 2l5 5-5 5M9 2l5 5-5 5M16 2l5 5-5 5" stroke={D} strokeWidth="2.5" /></Ic>
          </PromptTab>
        </ConsoleTabs>
        <ConsolePane>
          <ConsoleText>
            {[45, 46, 47, 48, 49].map((n) => <div key={n}>{`mdb.models['Model-1'].steps['e${n}']`}</div>)}
            <PromptLine>&gt;&gt;&gt;<input aria-label="命令" /></PromptLine>
          </ConsoleText>
          <ScrollTrack $end={5} aria-hidden="true">
            <Chevron up />
            <ScrollThumb $h={12} $m="auto 0 6px" />
            <Chevron />
          </ScrollTrack>
        </ConsolePane>
      </Console>

      <MacroManager />
      <StepManager />

      <Recorder>
        <Ic w={14} h={14}><circle cx="7" cy="7" r="7" fill={M} stroke="none" /></Ic>
        <RecorderGap $h={21} />
        <Ic w={14} h={38}><rect width="14" height="38" rx="7" fill="#40586e" stroke="none" /><path d="M0 22h14v9a7 7 0 0 1-14 0z" fill="#8498a6" stroke="none" /></Ic>
        <RecorderGap $h={20} />
        <Rate>2.0<small>K/s</small></Rate>
        <Rate>5.0<small>K/s</small></Rate>
        <RecorderGap $h={14} />
        <Ic w={20} h={18}><path d="M1 4h4l2-2h6l2 2h4v12H1z" stroke="#cfd5da" strokeWidth="1.6" /><circle cx="10" cy="10" r="3" fill={W} stroke="none" /></Ic>
      </Recorder>
    </Desktop>
  );
}
